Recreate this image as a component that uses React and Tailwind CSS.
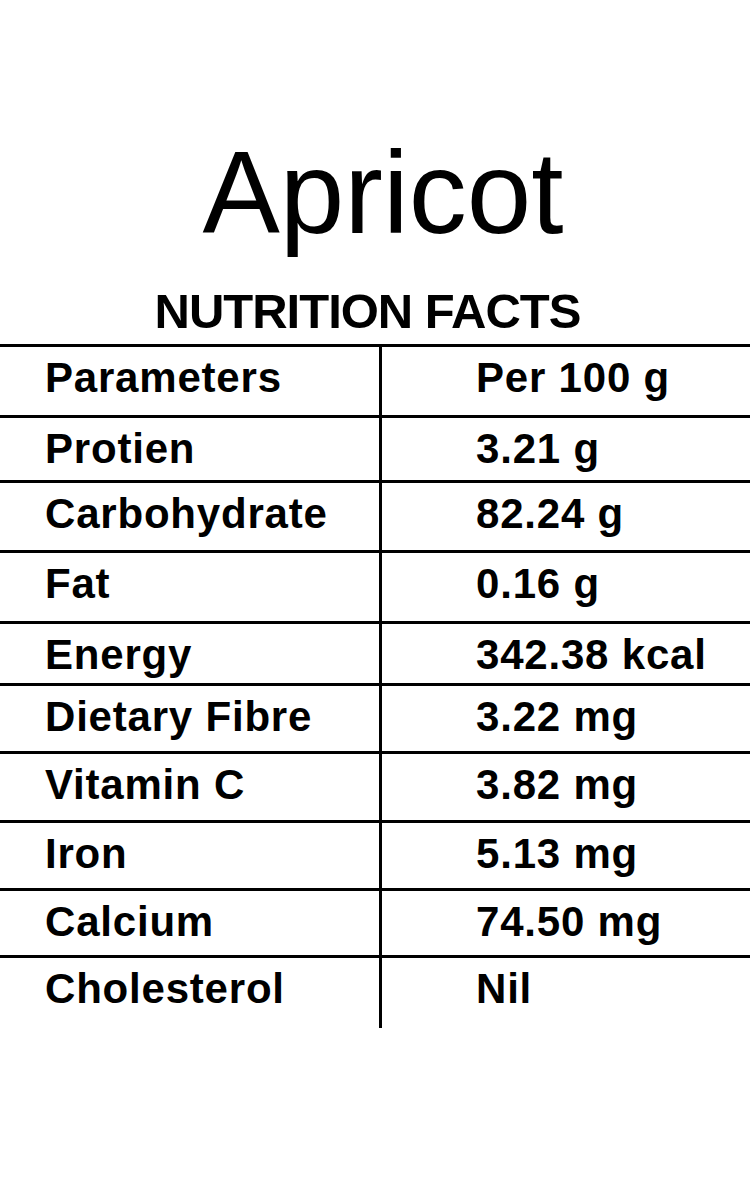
import React from "react";

const rows = [
  ["Parameters", "Per 100 g", "h-[71px]"],
  ["Protien", "3.21 g", "h-[65px]"],
  ["Carbohydrate", "82.24 g", "h-[70px]"],
  ["Fat", "0.16 g", "h-[71px]"],
  ["Energy", "342.38 kcal", "h-[62px]"],
  ["Dietary Fibre", "3.22 mg", "h-[68px]"],
  ["Vitamin C", "3.82 mg", "h-[69px]"],
  ["Iron", "5.13 mg", "h-[68px]"],
  ["Calcium", "74.50 mg", "h-[67px]"],
  ["Cholesterol", "Nil", "h-[70px]"],
];

export default function App() {
  return (
    <div
      className="w-[750px] h-[1178px] bg-white text-black overflow-hidden"
      style={{ fontFamily: '"Liberation Sans", Arial, sans-serif' }}
    >
      <div className="pt-[135px] pl-[16px] text-center text-[116px] leading-none">
        Apricot
      </div>
      <div className="mt-[36px] pr-[15px] text-center text-[49px] leading-none font-bold tracking-[-1px]">
        NUTRITION FACTS
      </div>
      <div className="mt-[8px] border-t-[3px] border-black">
        {rows.map(([a, b, h], i) => (
          <div
            key={a}
            className={`flex ${h} ${i < rows.length - 1 ? "border-b-[3px] border-black" : ""}`}
          >
            <div className="w-[382px] shrink-0 border-r-[3px] border-black pl-[45px] pt-[10px] text-[42px] leading-[42px] font-bold tracking-[0.8px]">
              {a}
            </div>
            <div className="pl-[94px] pt-[10px] text-[42px] leading-[42px] font-bold tracking-[0.8px]">
              {b}
            </div>
          </div>
        ))}
      </div>
    </div>
  );
}
